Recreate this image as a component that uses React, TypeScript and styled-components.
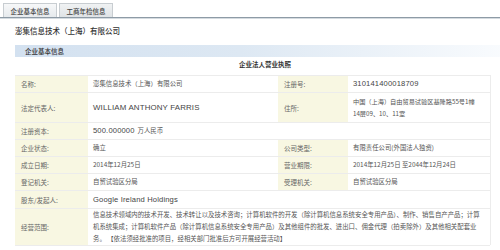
import React from "react";
import styled, { createGlobalStyle } from "styled-components";

const GlobalStyle = createGlobalStyle`
  html, body {
    margin: 0;
    padding: 0;
    background: #fff;
    overflow: hidden;
  }
  body {
    font-family: "Noto Sans CJK SC", "Liberation Sans", sans-serif;
    color: #555;
  }
`;

const Page = styled.div`
  width: 500px;
  height: 250px;
  overflow: hidden;
`;

const TabBar = styled.div`
  display: flex;
  gap: 2px;
  padding: 3px 0 0 3px;
  height: 14px;
  border-bottom: 1px solid #8e9ba6;
  box-shadow: 0 1px 0 #d5dbe0;
`;

const Tab = styled.div<{ $active?: boolean }>`
  width: 52px;
  height: 13px;
  display: flex;
  align-items: center;
  justify-content: center;
  font-size: 6.5px;
  font-weight: 500;
  color: #444;
  border: 1px solid #c8cdd1;
  border-bottom: none;
  background: ${(p) =>
    p.$active
      ? "linear-gradient(#f7f8f9, #e6eaed)"
      : "linear-gradient(#f0f2f3, #dfe3e6)"};
`;

const CompanyName = styled.div`
  padding: 6px 0 0 15px;
  height: 18px;
  font-size: 7.5px;
  font-weight: 500;
  color: #333;
  line-height: 14px;
`;

const Section = styled.div`
  margin-left: 15px;
  width: 500px;
`;

const SectionBar = styled.div`
  height: 12px;
  line-height: 12px;
  padding-left: 10px;
  font-size: 6.5px;
  font-weight: 500;
  color: #333;
  background: linear-gradient(90deg, #d3e1f0 0%, #dde8f3 45%, #fafcfe 100%);
  margin-top: 3px;
`;

const Title = styled.div`
  text-align: center;
  font-size: 6.5px;
  font-weight: 700;
  color: #333;
  height: 18px;
  line-height: 15px;
`;

const Table = styled.div`
  width: 475px;
  display: grid;
  grid-template-columns: 73px 190px 70px 142px;
  border-right: 1px solid #ececec;
`;

const Label = styled.div<{ $h: number }>`
  height: ${(p) => p.$h}px;
  display: flex;
  align-items: center;
  padding-left: 6px;
  background: #f8f7e2;
  border-top: 1px solid #ececec;
  font-size: 6.5px;
  color: #666;
  box-sizing: border-box;
`;

const Value = styled.div<{ $h: number; $span?: boolean; $tight?: boolean }>`
  height: ${(p) => p.$h}px;
  display: flex;
  align-items: center;
  padding: ${(p) => (p.$tight ? "0 2px 0 5px" : "0 5px")};
  border-top: 1px solid #ececec;
  font-size: ${(p) => (p.$tight ? 6.2 : 6.4)}px;
  line-height: 12px;
  color: #555;
  box-sizing: border-box;
  grid-column: ${(p) => (p.$span ? "span 3" : "auto")};
`;

const Latin = styled.span<{ $size?: number }>`
  font-family: "Liberation Sans", "Noto Sans CJK SC", sans-serif;
  font-size: ${(p) => p.$size ?? 7.6}px;
  color: #444;
  letter-spacing: 0.15px;
`;

const BottomLine = styled.div`
  width: 475px;
  border-top: 1px solid #ececec;
`;

export default function App() {
  return (
    <Page>
      <GlobalStyle />
      <TabBar>
        <Tab $active>企业基本信息</Tab>
        <Tab>工商年检信息</Tab>
      </TabBar>
      <CompanyName>澎集信息技术（上海）有限公司</CompanyName>
      <Section>
        <SectionBar>企业基本信息</SectionBar>
        <Title>企业法人营业执照</Title>
        <Table>
          <Label $h={17}>名称:</Label>
          <Value $h={17}>澎集信息技术（上海）有限公司</Value>
          <Label $h={17}>注册号:</Label>
          <Value $h={17}>
            <Latin>310141400018709</Latin>
          </Value>

          <Label $h={30}>法定代表人:</Label>
          <Value $h={30}>
            <Latin $size={7.9}>WILLIAM ANTHONY FARRIS</Latin>
          </Value>
          <Label $h={30}>住所:</Label>
          <Value $h={30} $tight>
            <span>
              中国（上海）自由贸易试验区基隆路55号1幢
              <br />
              14层09、10、11室
            </span>
          </Value>

          <Label $h={17}>注册资本:</Label>
          <Value $h={17} $span>
            <Latin>500.000000</Latin>&nbsp;&nbsp;万人民币
          </Value>

          <Label $h={17}>企业状态:</Label>
          <Value $h={17}>确立</Value>
          <Label $h={17}>公司类型:</Label>
          <Value $h={17}>有限责任公司(外国法人独资)</Value>

          <Label $h={17}>成立日期:</Label>
          <Value $h={17}>2014年12月25日</Value>
          <Label $h={17}>营业期限:</Label>
          <Value $h={17}>2014年12月25日 至2044年12月24日</Value>

          <Label $h={17}>登记机关:</Label>
          <Value $h={17}>自贸试验区分局</Value>
          <Label $h={17}>受理机关:</Label>
          <Value $h={17}>自贸试验区分局</Value>

          <Label $h={18}>股东/发起人:</Label>
          <Value $h={18} $span>
            <Latin>Google Ireland Holdings</Latin>
          </Value>

          <Label $h={37}>经营范围:</Label>
          <Value $h={37} $span>
            信息技术领域内的技术开发、技术转让以及技术咨询；计算机软件的开发（除计算机信息系统安全专用产品）、制作、销售自产产品；计算机系统集成；计算机软件产品（除计算机信息系统安全专用产品）及其他组件的批发、进出口、佣金代理（拍卖除外）及其他相关配套业务。
            【依法须经批准的项目，经相关部门批准后方可开展经营活动】
          </Value>
        </Table>
        <BottomLine />
      </Section>
    </Page>
  );
}
